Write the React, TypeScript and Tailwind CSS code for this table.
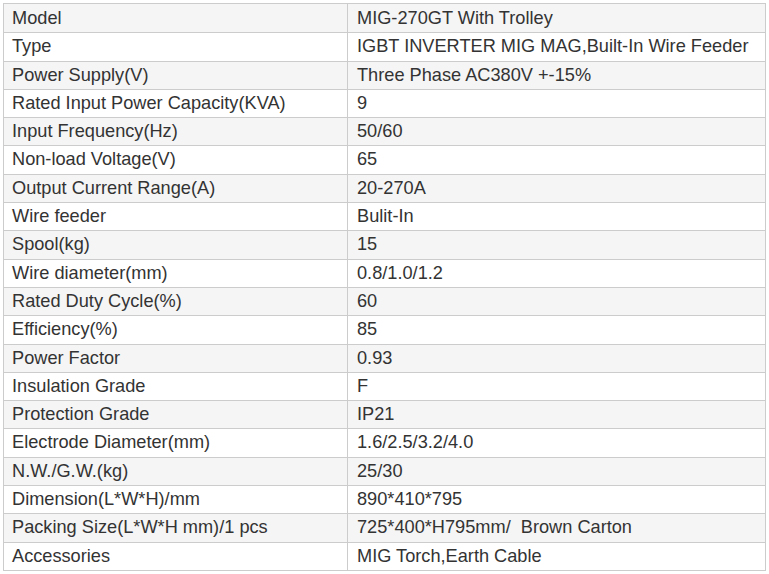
const rows: [string, string][] = [
  ['Model', 'MIG-270GT With Trolley'],
  ['Type', 'IGBT INVERTER MIG MAG,Built-In Wire Feeder'],
  ['Power Supply(V)', 'Three Phase AC380V +-15%'],
  ['Rated Input Power Capacity(KVA)', '9'],
  ['Input Frequency(Hz)', '50/60'],
  ['Non-load Voltage(V)', '65'],
  ['Output Current Range(A)', '20-270A'],
  ['Wire feeder', 'Bulit-In'],
  ['Spool(kg)', '15'],
  ['Wire diameter(mm)', '0.8/1.0/1.2'],
  ['Rated Duty Cycle(%)', '60'],
  ['Efficiency(%)', '85'],
  ['Power Factor', '0.93'],
  ['Insulation Grade', 'F'],
  ['Protection Grade', 'IP21'],
  ['Electrode Diameter(mm)', '1.6/2.5/3.2/4.0'],
  ['N.W./G.W.(kg)', '25/30'],
  ['Dimension(L*W*H)/mm', '890*410*795'],
  ['Packing Size(L*W*H mm)/1 pcs', '725*400*H795mm/\u00a0\u00a0Brown Carton'],
  ['Accessories', 'MIG Torch,Earth Cable'],
];

export default function App() {
  return (
    <div className="w-[769px] h-[574px] bg-white pt-[3px] pl-[3px]" style={{ fontFamily: '"Liberation Sans", Arial, sans-serif' }}>
      <div className="w-[763px] h-[568px] border border-[#cccccc] grid grid-rows-[repeat(20,minmax(0,1fr))] text-[18.2px] text-[#333333]">
        {rows.map(([k, v], i) => (
          <div
            key={k}
            className={`grid grid-cols-[343px_1fr] ${i > 0 ? 'border-t border-[#cccccc]' : ''} ${i % 2 === 0 ? 'bg-[#f5f5f5]' : 'bg-white'}`}
          >
            <div className="flex items-center pl-[8px] whitespace-nowrap">{k}</div>
            <div className="flex items-center pl-[9px] border-l border-[#cccccc] whitespace-nowrap">{v}</div>
          </div>
        ))}
      </div>
    </div>
  );
}
